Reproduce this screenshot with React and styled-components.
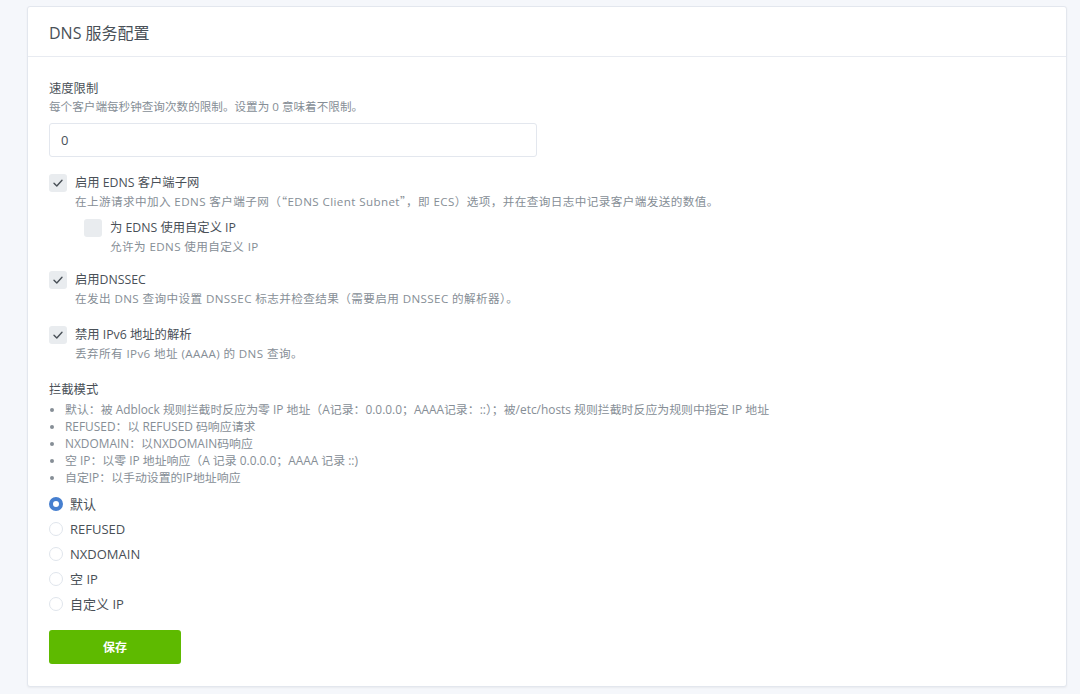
import React, { useState } from 'react'
import styled, { createGlobalStyle } from 'styled-components'

const GlobalStyle = createGlobalStyle`
  html, body {
    margin: 0;
    padding: 0;
    background: #f5f7fb;
  }
  body {
    font-family: "Open Sans", "Noto Sans CJK SC", sans-serif;
    color: #495057;
  }
  * {
    box-sizing: border-box;
  }
`

const Page = styled.div`
  padding: 6px 13px 8px 27px;
`

const Card = styled.section`
  background: #fff;
  border: 1px solid #e3e7ee;
  border-radius: 3px;
  box-shadow: 0 1px 2px rgba(0, 0, 0, 0.05);
  height: 681px;
`

const CardHeader = styled.header`
  height: 50px;
  display: flex;
  align-items: center;
  padding: 0 21px;
  border-bottom: 1px solid #e8ebf1;
`

const Title = styled.h3`
  margin: 0;
  font-size: 16px;
  font-weight: 400;
  color: #495057;
`

const CardBody = styled.div`
  padding: 23px 21px 22px;
`

const FieldLabel = styled.div`
  font-size: 12.3px;
  color: #495057;
  line-height: 18px;
`

const Hint = styled.div`
  font-size: 11.6px;
  color: #868e96;
  line-height: 17px;
`

// the reference draws curly quotes full width, as a CJK font does
const Wide = styled.span`
  font-family: "Noto Sans CJK SC", sans-serif;
`

const TextInput = styled.input`
  display: block;
  width: 488px;
  height: 34px;
  margin: 8px 0 17px;
  padding: 0 11px;
  border: 1px solid #e3e7ee;
  border-radius: 3px;
  font-family: inherit;
  font-size: 13px;
  color: #495057;
  outline: none;
`

const CheckRow = styled.label`
  display: grid;
  grid-template-columns: 18px 1fr;
  column-gap: 8px;
  align-items: center;
  margin-left: ${p => (p.$nested ? '35px' : '0')};
  margin-bottom: ${p => p.$gap || 18}px;
`

const Box = styled.span`
  width: 18px;
  height: 18px;
  border-radius: 3px;
  background: #e9ecef;
  display: flex;
  align-items: center;
  justify-content: center;
`

const CheckLabel = styled.span`
  font-size: 12.3px;
  line-height: 18px;
  color: #495057;
`

const CheckHint = styled(Hint)`
  grid-column: 2;
  margin-top: 1px;
  letter-spacing: 0.4px;
`

const List = styled.ul`
  margin: 2px 0 5px;
  padding: 0;
  list-style: none;
`

const Item = styled.li`
  position: relative;
  padding-left: 16px;
  font-size: 11.9px;
  line-height: 17px;
  color: #868e96;

  &::before {
    content: '';
    position: absolute;
    left: 1px;
    top: 7px;
    width: 4px;
    height: 4px;
    border-radius: 50%;
    background: #868e96;
  }
`

const RadioRow = styled.label`
  display: flex;
  align-items: center;
  gap: 7px;
  height: 25px;
  font-size: 13px;
  color: #495057;
  cursor: pointer;
`

const Dot = styled.span`
  width: 14px;
  height: 14px;
  border-radius: 50%;
  flex: none;
  background: #fff;
  border: ${p => (p.$on ? '4px solid #467fcf' : '1px solid #e0e5ec')};
`

const SaveButton = styled.button`
  display: block;
  width: 132px;
  height: 34px;
  margin-top: 14px;
  border: none;
  border-radius: 3px;
  background: #5eba00;
  color: #fff;
  font-family: inherit;
  font-size: 12px;
  font-weight: 700;
  cursor: pointer;
`

const Check = () => (
  <svg width="12" height="12" viewBox="0 0 12 12" fill="none">
    <path d="M2 6.2 L4.8 9 L10 3.2" stroke="#495057" strokeWidth="1.4" strokeLinecap="round" strokeLinejoin="round" />
  </svg>
)

const Option = ({ checked, label, hint, nested, gap }) => (
  <CheckRow $nested={nested} $gap={gap}>
    <Box>{checked && <Check />}</Box>
    <CheckLabel>{label}</CheckLabel>
    <CheckHint>{hint}</CheckHint>
  </CheckRow>
)

const modes = ['默认', 'REFUSED', 'NXDOMAIN', '空 IP', '自定义 IP']

export default function App() {
  const [mode, setMode] = useState(0)
  return (
    <Page>
      <GlobalStyle />
      <Card>
        <CardHeader>
          <Title>DNS 服务配置</Title>
        </CardHeader>
        <CardBody>
          <FieldLabel>速度限制</FieldLabel>
          <Hint>每个客户端每秒钟查询次数的限制。设置为 0 意味着不限制。</Hint>
          <TextInput defaultValue="0" />

          <Option
            checked
            label="启用 EDNS 客户端子网"
            hint={
              <>
                在上游请求中加入 EDNS 客户端子网（<Wide>“</Wide>EDNS Client Subnet<Wide>”</Wide>，即 ECS）选项，并在查询日志中记录客户端发送的数值。
              </>
            }
            gap={9}
          />
          <Option
            nested
            label="为 EDNS 使用自定义 IP"
            hint="允许为 EDNS 使用自定义 IP"
            gap={16}
          />
          <Option
            checked
            label="启用DNSSEC"
            hint="在发出 DNS 查询中设置 DNSSEC 标志并检查结果（需要启用 DNSSEC 的解析器）。"
            gap={19}
          />
          <Option
            checked
            label="禁用 IPv6 地址的解析"
            hint="丢弃所有 IPv6 地址 (AAAA) 的 DNS 查询。"
            gap={19}
          />

          <FieldLabel>拦截模式</FieldLabel>
          <List>
            <Item>默认：被 Adblock 规则拦截时反应为零 IP 地址（A记录：0.0.0.0；AAAA记录：::）；被/etc/hosts 规则拦截时反应为规则中指定 IP 地址</Item>
            <Item>REFUSED：以 REFUSED 码响应请求</Item>
            <Item>NXDOMAIN：以NXDOMAIN码响应</Item>
            <Item>空 IP：以零 IP 地址响应（A 记录 0.0.0.0；AAAA 记录 ::)</Item>
            <Item>自定IP：以手动设置的IP地址响应</Item>
          </List>
          {modes.map((m, i) => (
            <RadioRow key={m} onClick={() => setMode(i)}>
              <Dot $on={mode === i} />
              {m}
            </RadioRow>
          ))}
          <SaveButton>保存</SaveButton>
        </CardBody>
      </Card>
    </Page>
  )
}
